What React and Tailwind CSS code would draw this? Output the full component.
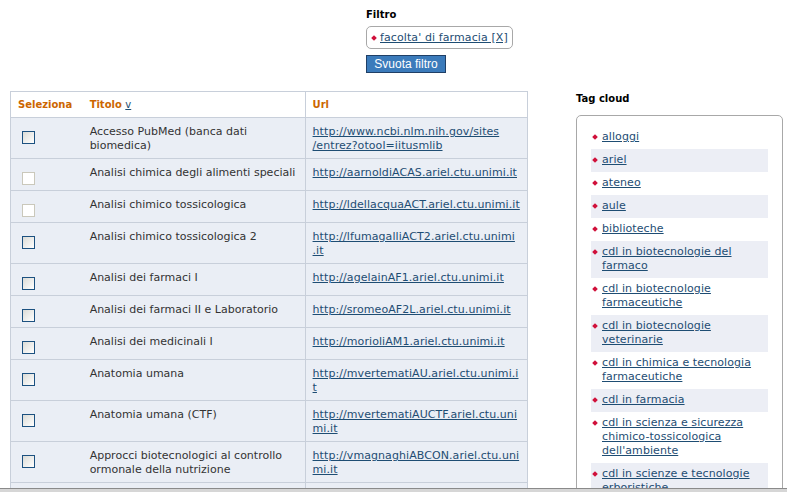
import React from "react";

const rows = [
  { t: "Accesso PubMed (banca dati biomedica)", u: ["http://www.ncbi.nlm.nih.gov/sites", "/entrez?otool=iitusmlib"], cb: true },
  { t: "Analisi chimica degli alimenti speciali", u: ["http://aarnoldiACAS.ariel.ctu.unimi.it"], cb: false },
  { t: "Analisi chimico tossicologica", u: ["http://ldellacquaACT.ariel.ctu.unimi.it"], cb: false },
  { t: "Analisi chimico tossicologica 2", u: ["http://lfumagalliACT2.ariel.ctu.unimi", ".it"], cb: true },
  { t: "Analisi dei farmaci I", u: ["http://agelainAF1.ariel.ctu.unimi.it"], cb: true },
  { t: "Analisi dei farmaci II e Laboratorio", u: ["http://sromeoAF2L.ariel.ctu.unimi.it"], cb: true },
  { t: "Analisi dei medicinali I", u: ["http://morioliAM1.ariel.ctu.unimi.it"], cb: true },
  { t: "Anatomia umana", u: ["http://mvertematiAU.ariel.ctu.unimi.i", "t"], cb: true },
  { t: "Anatomia umana (CTF)", u: ["http://mvertematiAUCTF.ariel.ctu.uni", "mi.it"], cb: true },
  { t: "Approcci biotecnologici al controllo ormonale della nutrizione", u: ["http://vmagnaghiABCON.ariel.ctu.uni", "mi.it"], cb: true },
  { t: "Biochimica", u: ["http://biochimicaBC.ariel.ctu.unimi.it"], cb: true },
];

const tags = [
  "alloggi",
  "ariel",
  "ateneo",
  "aule",
  "biblioteche",
  "cdl in biotecnologie del farmaco",
  "cdl in biotecnologie farmaceutiche",
  "cdl in biotecnologie veterinarie",
  "cdl in chimica e tecnologia farmaceutiche",
  "cdl in farmacia",
  "cdl in scienza e sicurezza chimico-tossicologica dell'ambiente",
  "cdl in scienze e tecnologie erboristiche",
  "cdl in scienze farmaceutiche applicate",
];

function Bullet() {
  return <span className="mt-[5px] ml-[2px] mr-[5px] h-[4px] w-[4px] shrink-0 rotate-45 bg-[#d0103a]" />;
}

function Checkbox({ enabled }) {
  return enabled ? (
    <div className="ml-[4px] mt-[6px] h-[13px] w-[13px] border border-[#1c5180] bg-gradient-to-br from-[#dcdcd7] to-white" />
  ) : (
    <div className="ml-[4px] mt-[6px] h-[13px] w-[13px] border border-[#cac8bb] bg-white" />
  );
}

export default function App() {
  return (
    <div className="relative h-[492px] overflow-hidden bg-white font-['DejaVu_Sans',sans-serif] text-[11px] leading-[14px] text-[#333]">
      <div className="pl-[366px] pt-[8px]">
        <div className="text-[10px] font-bold leading-[14px] text-black">Filtro</div>
        <div className="mt-[4px] flex h-[23px] w-[147px] items-center rounded-[5px] border border-[#a8a8a8] pl-[5px]">
          <span className="mr-[4px] h-[4px] w-[4px] rotate-45 bg-[#d0103a]" />
          <a className="tracking-[0.1px] text-[#1e4d73] underline">facolta' di farmacia [X]</a>
        </div>
        <button className="mt-[6px] flex h-[18px] w-[80px] items-center justify-center border border-[#1f3f66] bg-[#3b7bbb] font-['Liberation_Sans',sans-serif] text-[12px] text-white">
          Svuota filtro
        </button>
      </div>

      <div className="mt-[18px] flex items-start">
        <table className="ml-[10px] w-[518px] table-fixed border-collapse border border-[#c8cfda]">
          <colgroup>
            <col className="w-[72px]" />
            <col className="w-[222px]" />
            <col className="w-[222px]" />
          </colgroup>
          <thead>
            <tr className="bg-white">
              <th className="px-[7px] pb-[5px] pt-[6px] text-left align-top text-[10px] font-bold text-[#cc6600]">Seleziona</th>
              <th className="px-[7px] pb-[5px] pt-[6px] text-left align-top text-[10px] font-bold text-[#cc6600]">
                Titolo <a className="font-normal text-[#1e4d73] underline">v</a>
              </th>
              <th className="border-l border-[#c8cfda] px-[7px] pb-[5px] pt-[6px] text-left align-top text-[10px] font-bold text-[#cc6600]">Url</th>
            </tr>
          </thead>
          <tbody>
            {rows.map((r, i) => (
              <tr key={i} className="border-t border-[#c8cfda] bg-[#eaeef5]">
                <td className="px-[7px] pb-[5px] pt-[7px] align-top">
                  <Checkbox enabled={r.cb} />
                </td>
                <td className="px-[7px] pb-[5px] pt-[7px] align-top">{r.t}</td>
                <td className="whitespace-nowrap border-l border-[#c8cfda] px-[7px] pb-[5px] pt-[7px] align-top tracking-[0.08px]">
                  {r.u.map((line, j) => (
                    <div key={j}>
                      <a className="text-[#1e4d73] underline">{line}</a>
                    </div>
                  ))}
                </td>
              </tr>
            ))}
          </tbody>
        </table>

        <aside className="ml-[48px] w-[207px] pt-[1px]">
          <div className="text-[10px] font-bold leading-[14px] text-black">Tag cloud</div>
          <div className="mt-[9px] rounded-[5px] border border-[#a8a8a8] pb-[10px] pl-[14px] pr-[14px] pt-[10px]">
            <ul>
              {tags.map((t, i) => (
                <li
                  key={i}
                  className={`flex items-start pb-[5px] pr-[8px] pt-[4px] ${i % 2 === 1 ? "bg-[#eceef5]" : ""}`}
                >
                  <Bullet />
                  <a className="tracking-[0.08px] text-[#1e4d73] underline">{t}</a>
                </li>
              ))}
            </ul>
          </div>
        </aside>
      </div>

      <div className="fixed bottom-0 left-0 right-0 h-[4px] border-t border-[#8a8a8a] bg-[#d6d6d6]" />
    </div>
  );
}
